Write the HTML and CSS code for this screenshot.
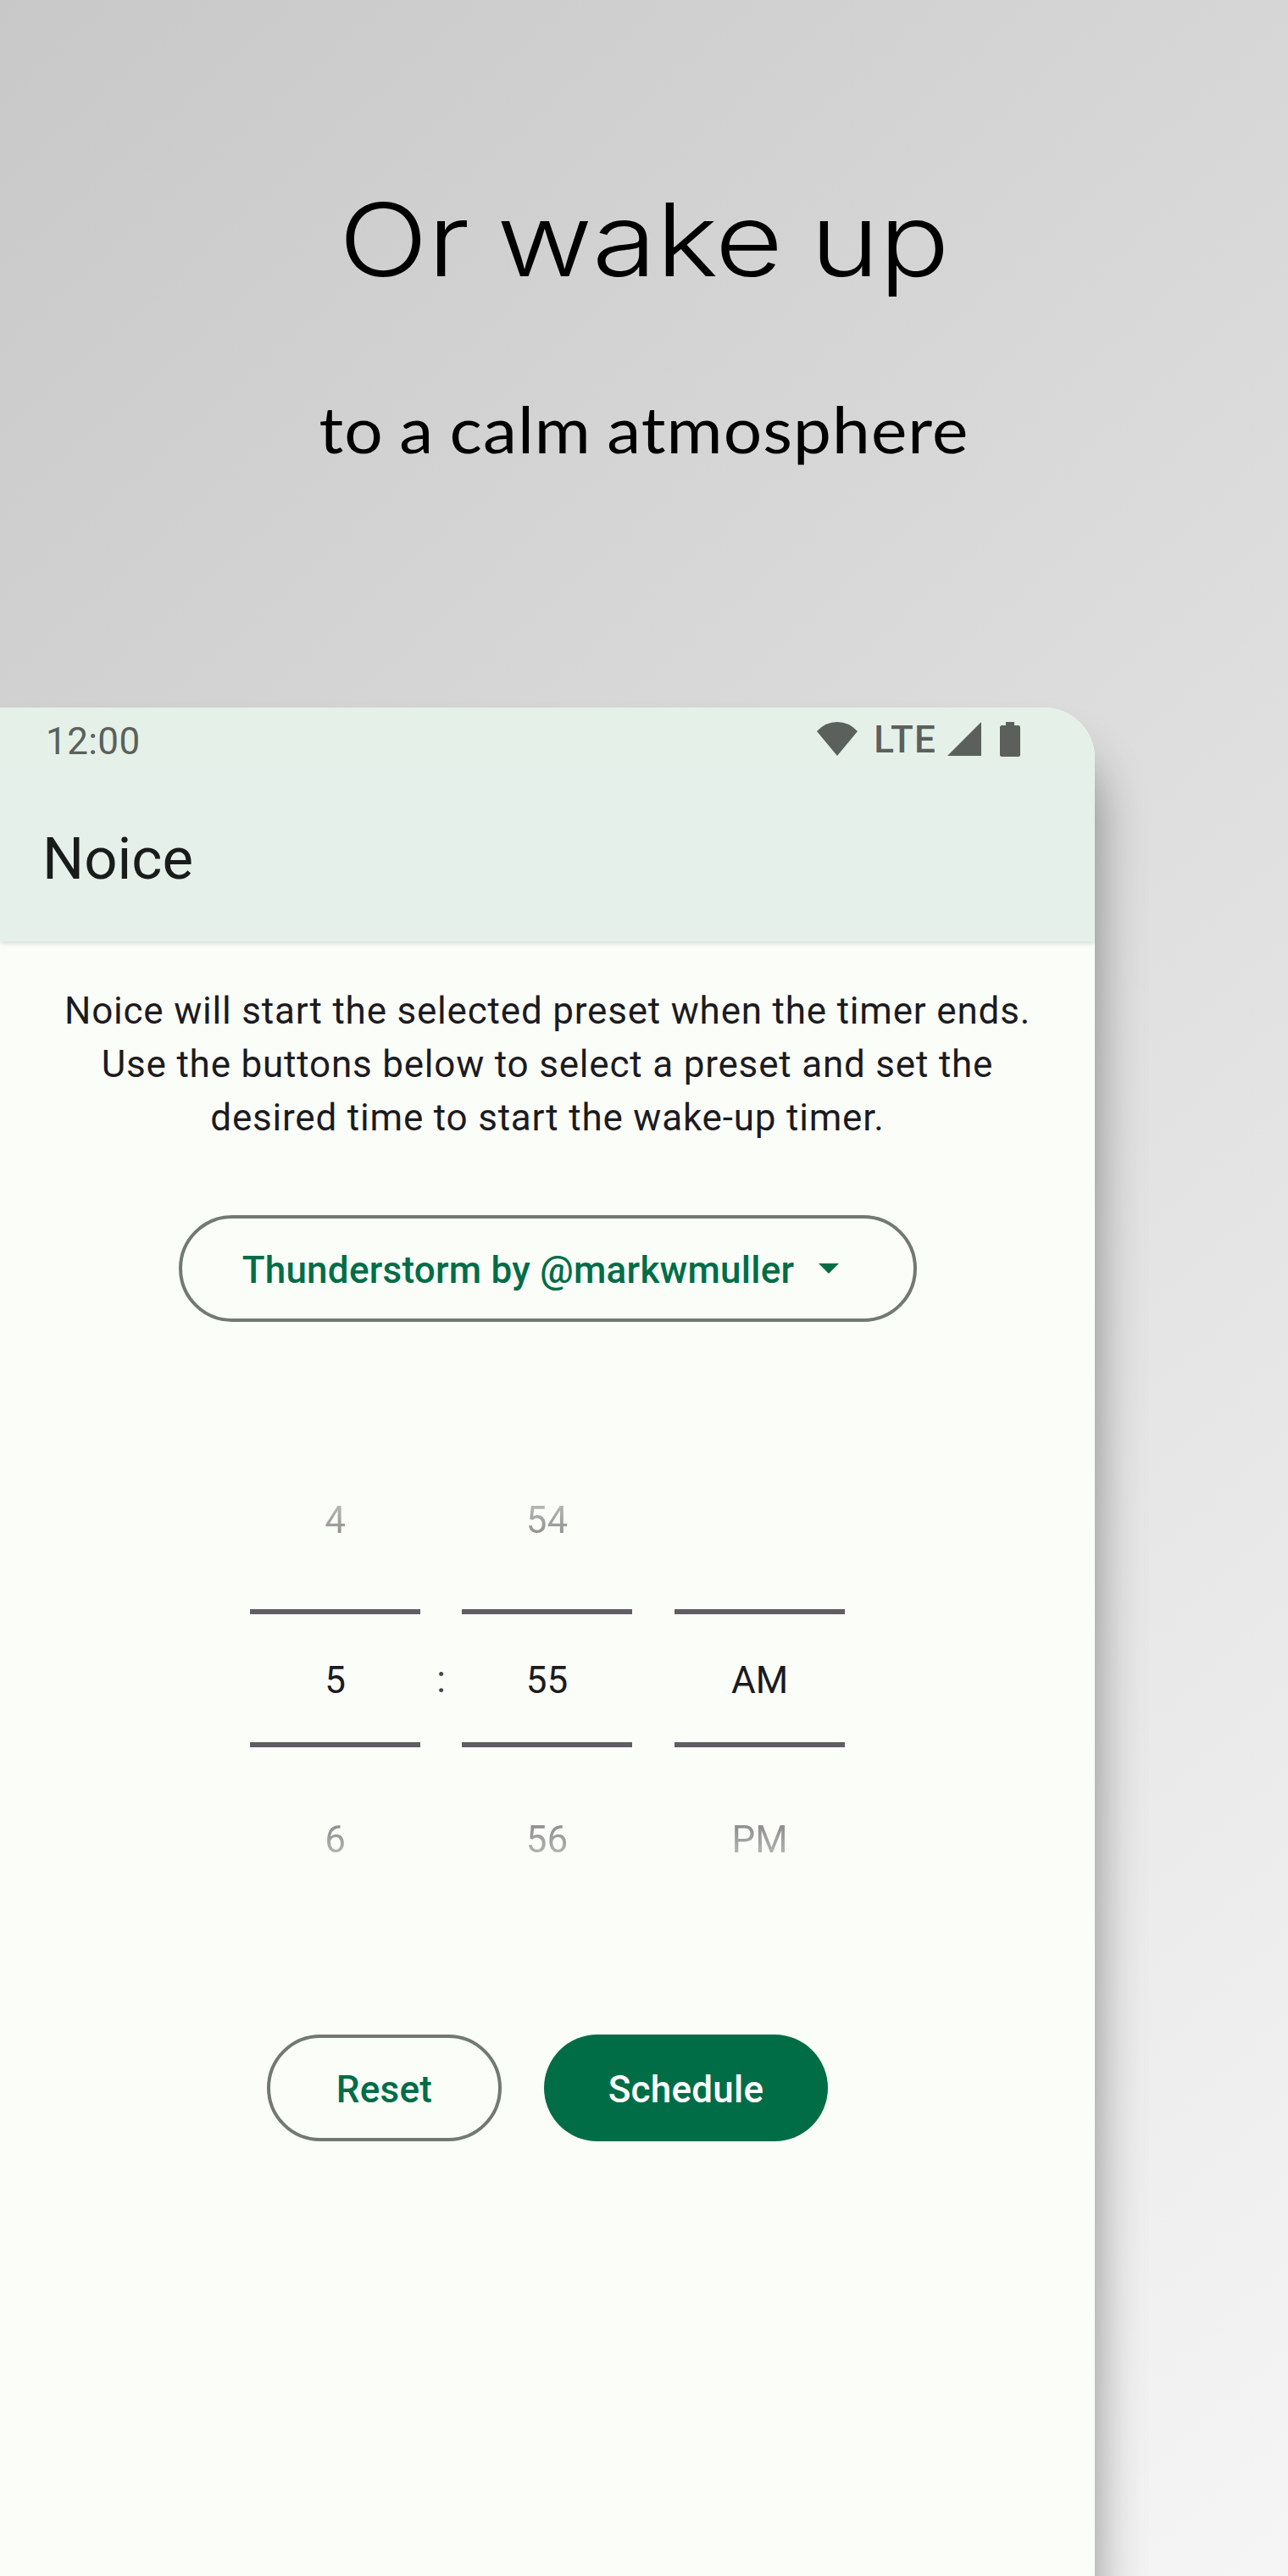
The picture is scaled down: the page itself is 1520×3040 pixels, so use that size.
FILE: index.html
```html
<!DOCTYPE html>
<html lang="en">
<head>
<meta charset="utf-8">
<title>Noice</title>
<link rel="stylesheet" href="styles.css">
</head>
<body>
<main class="poster">
  <header class="promo">
    <h1 class="headline">Or wake up</h1>
    <p class="tagline">to a calm atmosphere</p>
  </header>
  <section class="phone">
    <div class="status">
      <span class="clock">12:00</span>
      <svg class="wifi" viewBox="0 0 48 40"><path d="M0 11Q10 0 24 0T48 11L24 40Z"/></svg>
      <span class="network">LTE</span>
      <svg class="signal" viewBox="0 0 40 40"><path d="M40 0V40H0Z"/></svg>
      <svg class="battery" viewBox="0 0 24 41"><path d="M7 0H17V4H21.500Q24 4 24 6.500V38.500Q24 41 21.500 41H2.500Q0 41 0 38.500V6.500Q0 4 2.500 4H7Z"/></svg>
    </div>
    <div class="appbar">Noice</div>
    <div class="content">
      <p class="help">Noice will start the selected preset when the timer ends.<br>Use the buttons below to select a preset and set the<br>desired time to start the wake-up timer.</p>
      <button class="btn preset">Thunderstorm by @markwmuller<svg class="caret" viewBox="0 0 24 12"><path d="M0 0H24L12 12Z"/></svg></button>
      <div class="picker">
        <div class="wheel"><span class="prev">4</span><span class="current">5</span><span class="next">6</span></div>
        <span class="colon">:</span>
        <div class="wheel"><span class="prev">54</span><span class="current">55</span><span class="next">56</span></div>
        <div class="wheel period"><span class="prev"></span><span class="current">AM</span><span class="next">PM</span></div>
      </div>
      <div class="actions">
        <button class="btn reset">Reset</button>
        <button class="btn schedule">Schedule</button>
      </div>
    </div>
  </section>
</main>
</body>
</html>
```
FILE: styles.css
```css
* { box-sizing: border-box; }
body { margin: 0; font-family: Roboto, sans-serif; }
.poster {
  width: 1520px;
  height: 3040px;
  overflow: hidden;
  background: linear-gradient(138deg, #c8c8c8, #f5f5f5);
}
.promo { height: 835px; padding-top: 208px; text-align: center; color: #000; }
.headline {
  margin: 0;
  font: 365 119px/150px Inter, sans-serif;
  letter-spacing: -.5px;
  word-spacing: -5px;
  transform: scaleX(1.165);
}
.tagline {
  margin: 68px 0 0;
  font: 400 76px/160px Lato, sans-serif;
  letter-spacing: 1px;
  word-spacing: -3px;
  transform: scaleX(1.056);
}
.phone {
  width: 1292px;
  height: 2300px;
  border-top-right-radius: 60px;
  background: #fbfdf8;
  box-shadow: 0 56px 58px rgba(0, 0, 0, .42);
}
.status {
  display: flex;
  align-items: flex-start;
  height: 76px;
  padding: 17px 88px 0 54px;
  border-top-right-radius: 60px;
  background: #e5f1e8;
  color: #5c605c;
  font-size: 44px;
  line-height: 44px;
}
.status svg { fill: #5c605c; }
.clock { margin-right: auto; padding-top: 1px; letter-spacing: .4px; }
.wifi { width: 48px; height: 40px; margin-right: 19px; }
.network { margin-top: -1px; font-weight: 500; letter-spacing: 1.2px; }
.signal { width: 40px; height: 40px; margin: 0 22px 0 13px; }
.battery { width: 24px; height: 41px; }
.appbar {
  height: 200px;
  padding-left: 50px;
  background: #e5f0ea;
  box-shadow: 0 2px 6px rgba(0, 0, 0, .15);
  clip-path: inset(0 0 -12px 0);
  color: #191c1a;
  font-size: 69px;
  line-height: 206px;
}
.content { display: flex; flex-direction: column; align-items: center; padding-top: 51px; }
.help {
  margin: 0;
  color: #1c1b1f;
  font-size: 44px;
  line-height: 62.8px;
  letter-spacing: .8px;
  text-align: center;
  white-space: nowrap;
}
.btn {
  display: flex;
  align-items: center;
  justify-content: center;
  height: 126px;
  padding: 3px 0 0;
  border: 4px solid #717973;
  border-radius: 63px;
  background: none;
  color: #006d47;
  font: 500 44px/52px Roboto, sans-serif;
  letter-spacing: .25px;
}
.preset { width: 871px; margin-top: 84px; padding: 4px 16px 0 0; }
.caret { width: 24px; height: 12px; margin: -4px 0 0 29px; fill: #006d47; }
.picker { display: flex; align-items: center; margin-top: 138px; }
.wheel {
  display: grid;
  grid-template-rows: 201px 163px 201px;
  width: 201px;
  text-align: center;
  color: #1c1b1f;
  font-size: 44px;
}
.wheel span { display: flex; align-items: center; justify-content: center; }
.wheel .current { padding-top: 4px; border-top: 6px solid #605d64; border-bottom: 6px solid #605d64; }
.wheel .prev, .wheel .next { color: transparent; background-clip: text; -webkit-background-clip: text; }
.wheel .prev { padding-bottom: 9px; background-image: linear-gradient(#fbfdf8, #afb1ae 42%, #8c8d8c 58%); }
.wheel .next { padding-top: 17px; background-image: linear-gradient(#8c8d8c 45%, #b2b4b1 62%, #fbfdf8); }
.colon { width: 49px; padding-top: 3px; color: #49454f; font-size: 44px; text-align: center; }
.period { margin-left: 50px; }
.actions { display: flex; gap: 50px; margin-top: 138px; }
.reset { width: 277px; }
.schedule { width: 335px; border: 0; background: #006d47; color: #fff; }
```
